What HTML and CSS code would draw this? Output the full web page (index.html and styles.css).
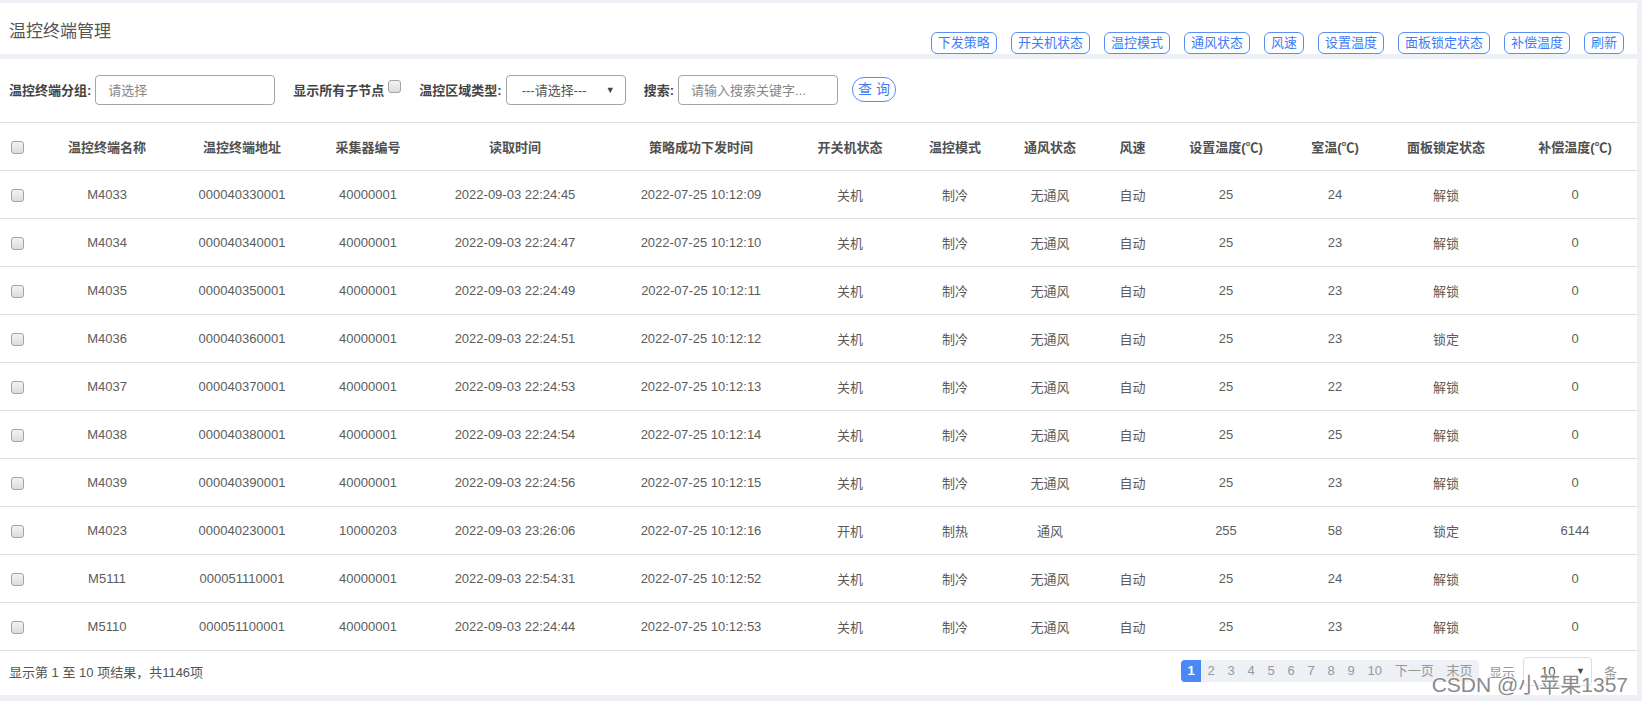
FILE: index.html
```html
<!DOCTYPE html>
<html lang="zh-CN">
<head>
<meta charset="utf-8">
<title>温控终端管理</title>
<link rel="stylesheet" href="styles.css">
</head>
<body>
<div class="page">
  <header class="head">
    <h1 class="title">温控终端管理</h1>
    <div class="actions">
      <button class="btn">下发策略</button>
      <button class="btn">开关机状态</button>
      <button class="btn">温控模式</button>
      <button class="btn">通风状态</button>
      <button class="btn">风速</button>
      <button class="btn">设置温度</button>
      <button class="btn">面板锁定状态</button>
      <button class="btn">补偿温度</button>
      <button class="btn">刷新</button>
    </div>
  </header>

  <section class="panel">
    <div class="filters">
      <div class="field">
        <label class="lbl">温控终端分组:</label>
        <div class="input w-group"><span class="ph">请选择</span></div>
      </div>
      <div class="field">
        <label class="lbl">显示所有子节点</label>
        <span class="cb cb-raise"></span>
      </div>
      <div class="field">
        <label class="lbl">温控区域类型:</label>
        <div class="input select w-area"><span class="val">---请选择---</span><span class="arrow">▼</span></div>
      </div>
      <div class="field">
        <label class="lbl">搜索:</label>
        <div class="input w-search"><span class="ph">请输入搜索关键字...</span></div>
      </div>
      <button class="btn-query">查 询</button>
    </div>

    <div class="table">
      <div class="tr th">
        <div><span class="cb"></span></div>
        <div>温控终端名称</div>
        <div>温控终端地址</div>
        <div>采集器编号</div>
        <div>读取时间</div>
        <div>策略成功下发时间</div>
        <div>开关机状态</div>
        <div>温控模式</div>
        <div>通风状态</div>
        <div>风速</div>
        <div>设置温度(℃)</div>
        <div>室温(℃)</div>
        <div>面板锁定状态</div>
        <div>补偿温度(℃)</div>
      </div>
      <div class="tr"><div><span class="cb"></span></div><div>M4033</div><div>000040330001</div><div>40000001</div><div>2022-09-03 22:24:45</div><div>2022-07-25 10:12:09</div><div>关机</div><div>制冷</div><div>无通风</div><div>自动</div><div>25</div><div>24</div><div>解锁</div><div>0</div></div>
      <div class="tr"><div><span class="cb"></span></div><div>M4034</div><div>000040340001</div><div>40000001</div><div>2022-09-03 22:24:47</div><div>2022-07-25 10:12:10</div><div>关机</div><div>制冷</div><div>无通风</div><div>自动</div><div>25</div><div>23</div><div>解锁</div><div>0</div></div>
      <div class="tr"><div><span class="cb"></span></div><div>M4035</div><div>000040350001</div><div>40000001</div><div>2022-09-03 22:24:49</div><div>2022-07-25 10:12:11</div><div>关机</div><div>制冷</div><div>无通风</div><div>自动</div><div>25</div><div>23</div><div>解锁</div><div>0</div></div>
      <div class="tr"><div><span class="cb"></span></div><div>M4036</div><div>000040360001</div><div>40000001</div><div>2022-09-03 22:24:51</div><div>2022-07-25 10:12:12</div><div>关机</div><div>制冷</div><div>无通风</div><div>自动</div><div>25</div><div>23</div><div>锁定</div><div>0</div></div>
      <div class="tr"><div><span class="cb"></span></div><div>M4037</div><div>000040370001</div><div>40000001</div><div>2022-09-03 22:24:53</div><div>2022-07-25 10:12:13</div><div>关机</div><div>制冷</div><div>无通风</div><div>自动</div><div>25</div><div>22</div><div>解锁</div><div>0</div></div>
      <div class="tr"><div><span class="cb"></span></div><div>M4038</div><div>000040380001</div><div>40000001</div><div>2022-09-03 22:24:54</div><div>2022-07-25 10:12:14</div><div>关机</div><div>制冷</div><div>无通风</div><div>自动</div><div>25</div><div>25</div><div>解锁</div><div>0</div></div>
      <div class="tr"><div><span class="cb"></span></div><div>M4039</div><div>000040390001</div><div>40000001</div><div>2022-09-03 22:24:56</div><div>2022-07-25 10:12:15</div><div>关机</div><div>制冷</div><div>无通风</div><div>自动</div><div>25</div><div>23</div><div>解锁</div><div>0</div></div>
      <div class="tr"><div><span class="cb"></span></div><div>M4023</div><div>000040230001</div><div>10000203</div><div>2022-09-03 23:26:06</div><div>2022-07-25 10:12:16</div><div>开机</div><div>制热</div><div>通风</div><div></div><div>255</div><div>58</div><div>锁定</div><div>6144</div></div>
      <div class="tr"><div><span class="cb"></span></div><div>M5111</div><div>000051110001</div><div>40000001</div><div>2022-09-03 22:54:31</div><div>2022-07-25 10:12:52</div><div>关机</div><div>制冷</div><div>无通风</div><div>自动</div><div>25</div><div>24</div><div>解锁</div><div>0</div></div>
      <div class="tr"><div><span class="cb"></span></div><div>M5110</div><div>000051100001</div><div>40000001</div><div>2022-09-03 22:24:44</div><div>2022-07-25 10:12:53</div><div>关机</div><div>制冷</div><div>无通风</div><div>自动</div><div>25</div><div>23</div><div>解锁</div><div>0</div></div>
    </div>

    <div class="foot">
      <div class="info">显示第 1 至 10 项结果，共1146项</div>
      <div class="pagebox">
        <div class="pager">
          <span class="pg active">1</span>
          <span class="pg">2</span>
          <span class="pg">3</span>
          <span class="pg">4</span>
          <span class="pg">5</span>
          <span class="pg">6</span>
          <span class="pg">7</span>
          <span class="pg">8</span>
          <span class="pg">9</span>
          <span class="pg">10</span>
          <span class="pg">下一页</span>
          <span class="pg">末页</span>
        </div>
        <span class="show">显示</span>
        <div class="size"><span>10</span><span class="arrow">▼</span></div>
        <span class="unit">条</span>
      </div>
    </div>
    <div class="watermark">CSDN @小苹果1357</div>
  </section>
</div>
</body>
</html>
```

FILE: styles.css
```css
* { box-sizing: border-box; }

html, body {
  margin: 0;
  padding: 0;
  background: #edf0f4;
  font-family: "Liberation Sans", "Noto Sans CJK SC", sans-serif;
  font-size: 13px;
  color: #5c5c5c;
}

.page {
  padding-top: 3px;
  width: 1642px;
  height: 701px;
  overflow: hidden;
}

.head {
  width: 1637px;
  height: 51px;
  background: #fff;
  display: flex;
  justify-content: space-between;
  padding: 0 13px 0 9px;
}

.title {
  margin: 0;
  padding-top: 6px;
  align-self: center;
  font-size: 17px;
  font-weight: normal;
  color: #555;
  line-height: 22px;
}

.actions {
  align-self: flex-end;
  display: flex;
  gap: 14px;
}

.btn {
  height: 22px;
  padding: 0 6px;
  border: 1px solid #5a8df5;
  border-radius: 6px;
  background: #fff;
  color: #3f7cf3;
  font-family: "Liberation Sans", "Noto Sans CJK SC", sans-serif;
  font-size: 13px;
  line-height: 20px;
}

.panel {
  position: relative;
  margin-top: 5px;
  width: 1637px;
  background: #fff;
}

.filters {
  height: 63px;
  display: flex;
  align-items: center;
  padding: 0 9px 2px;
}

.field {
  display: flex;
  align-items: center;
  gap: 4px;
  margin-right: 18px;
}

.lbl {
  font-weight: bold;
  color: #444;
  font-size: 13px;
}

.input {
  height: 30px;
  border: 1px solid #a5a5a5;
  border-radius: 4px;
  display: flex;
  align-items: center;
  padding-left: 12px;
  color: #888;
  font-size: 13px;
}

.w-group { width: 180px; }
.w-search { width: 160px; }
.w-area { width: 120px; padding-left: 15px; padding-right: 10px; justify-content: space-between; color: #555; }

.ph { color: #888; }

.arrow {
  font-size: 9px;
  color: #444;
}

.cb {
  display: inline-block;
  width: 13px;
  height: 13px;
  border: 1px solid #a3a3a3;
  border-radius: 3px;
  background: linear-gradient(#f3f3f3, #dcdcdc);
  vertical-align: middle;
}

.cb-raise { margin-top: -6px; }

.btn-query {
  margin-left: -4px;
  height: 25px;
  width: 44px;
  padding: 0;
  border: 1px solid #5a8df5;
  border-radius: 12px;
  background: #fff;
  color: #3f7cf3;
  font-family: "Liberation Sans", "Noto Sans CJK SC", sans-serif;
  font-size: 14px;
  line-height: 23px;
}

.table {
  border-top: 1px solid #ddd;
}

.tr {
  display: grid;
  grid-template-columns: 34px 146px 124px 128px 166px 192px 115px 100px 90px 75px 112px 106px 116px 133px;
  height: 48px;
  align-items: center;
  border-bottom: 1px solid #ddd;
  text-align: center;
  color: #5c5c5c;
}

.tr > div {
  white-space: nowrap;
}

.tr > div:nth-child(6) { padding-left: 14px; }
.tr > div:nth-child(7) { padding-left: 5px; }
.tr > div:nth-child(14) { padding-left: 9px; }

.th {
  font-weight: bold;
  color: #505050;
}

.foot {
  height: 44px;
  display: flex;
  justify-content: space-between;
  align-items: center;
  padding: 0 20px 4px 9px;
  color: #555;
}

.pagebox {
  display: flex;
  align-items: center;
}

.pager {
  display: flex;
  height: 22px;
  background: #edf0f4;
  border-radius: 4px;
  margin-right: 10px;
}

.pg {
  padding: 0 6.4px;
  line-height: 22px;
  color: #999;
  font-size: 13px;
}

.pg.active {
  background: #4a88f5;
  color: #fff;
  font-weight: bold;
  border-radius: 4px 0 0 4px;
}

.show { color: #999; margin-right: 8px; }

.size {
  width: 69px;
  height: 29px;
  border: 1px solid #ddd;
  border-radius: 4px;
  display: flex;
  align-items: center;
  justify-content: space-between;
  padding: 0 6px 0 17px;
  color: #555;
  margin-right: 12px;
}

.unit { color: #999; }

.watermark {
  position: absolute;
  right: 9px;
  bottom: -2px;
  font-size: 21px;
  line-height: 24px;
  color: #8a8a8a;
  text-shadow: 0 0 2px #fff, 0 0 2px #fff;
  white-space: nowrap;
}
```
